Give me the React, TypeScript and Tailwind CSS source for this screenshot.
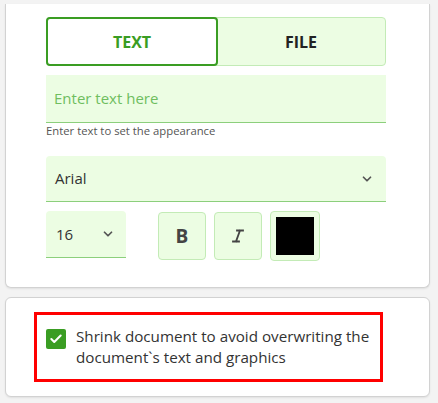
import { Check, ChevronDown } from "lucide-react";

const font = { fontFamily: '"Open Sans", "Noto Sans", sans-serif' };

export default function App() {
  return (
    <div
      className="min-h-[403px] w-[438px] bg-[#f3f3f3] pt-[4px] text-[#333]"
      style={font}
    >
      <div className="ml-[5px] w-[425px] rounded-b-[6px] border border-t-0 border-[#d2d2d2] bg-white pb-[26px] pl-[40px] pr-[43px] pt-[13px] shadow-[0_1px_2px_rgba(0,0,0,0.08)]">
        <div className="flex h-[49px] rounded-[4px] border border-[#c3ebb6] bg-[#ecfde3]">
          <button className="-m-px flex flex-1 items-center justify-center rounded-[4px] border-2 border-[#3a9d23] bg-white text-[16px] font-bold text-[#3a9d23]">
            TEXT
          </button>
          <button className="flex flex-1 items-center justify-center text-[16px] font-bold text-[#222]">
            FILE
          </button>
        </div>

        <div className="mt-[9px] flex h-[48px] items-center border-b-[1.5px] border-[#8ccf7c] bg-[#ecfde3] px-[8px] text-[15px] text-[#6fbe5f]">
          Enter text here
        </div>
        <div className="mt-[1px] text-[11.3px] leading-[14px] text-[#555]">
          Enter text to set the appearance
        </div>

        <div className="mt-[18px] flex h-[46px] items-center justify-between rounded-t-[4px] border-b-[1.5px] border-[#8ccf7c] bg-[#ecfde3] pl-[9px] pr-[12px] text-[15px] text-[#333]">
          <span>Arial</span>
          <ChevronDown size={14} strokeWidth={3} className="text-[#555]" />
        </div>

        <div className="mt-[9px] flex items-start">
          <div className="flex h-[47px] w-[80px] items-center justify-between rounded-t-[4px] border-b-[1.5px] border-[#8ccf7c] bg-[#ecfde3] pl-[10px] pr-[11px] text-[15px]">
            <span>16</span>
            <ChevronDown size={14} strokeWidth={3} className="text-[#555]" />
          </div>
          <button className="ml-[32px] mt-[1px] flex h-[48px] w-[48px] items-center justify-center rounded-[4px] border border-[#c3ebb6] bg-[#ecfde3] text-[19px] font-bold text-[#444]">
            B
          </button>
          <button className="ml-[8px] mt-[1px] flex h-[48px] w-[48px] items-center justify-center rounded-[4px] border border-[#c3ebb6] bg-[#ecfde3] text-[#444]">
            <svg width="14" height="14" viewBox="0 0 14 14" fill="none" stroke="currentColor" strokeWidth="1.8" strokeLinecap="square">
              <path d="M6 1.5h6M2 12.5h6M9 1.5L5 12.5" />
            </svg>
          </button>
          <div className="ml-[8px] flex h-[50px] w-[50px] items-center justify-center rounded-[4px] border border-[#c3ebb6] bg-[#ecfde3]">
            <div className="h-[38px] w-[38px] bg-black" />
          </div>
        </div>
      </div>

      <div className="ml-[5px] mt-[9px] w-[425px] rounded-[6px] border border-[#d2d2d2] bg-white px-[28px] py-[14px] shadow-[0_1px_2px_rgba(0,0,0,0.08)]">
        <div className="flex w-[349px] items-start gap-[10px] border-[3px] border-[#ff0000] pb-[11px] pl-[9px] pt-[11px]">
          <div className="mt-[3px] flex h-[20px] w-[20px] shrink-0 items-center justify-center rounded-[2px] bg-[#3a9d23]">
            <Check size={14} strokeWidth={3.5} className="text-white" />
          </div>
          <div className="whitespace-nowrap text-[15.2px] leading-[21px] text-[#333]">
            Shrink document to avoid overwriting the
            <br />
            document`s text and graphics
          </div>
        </div>
      </div>
    </div>
  );
}
